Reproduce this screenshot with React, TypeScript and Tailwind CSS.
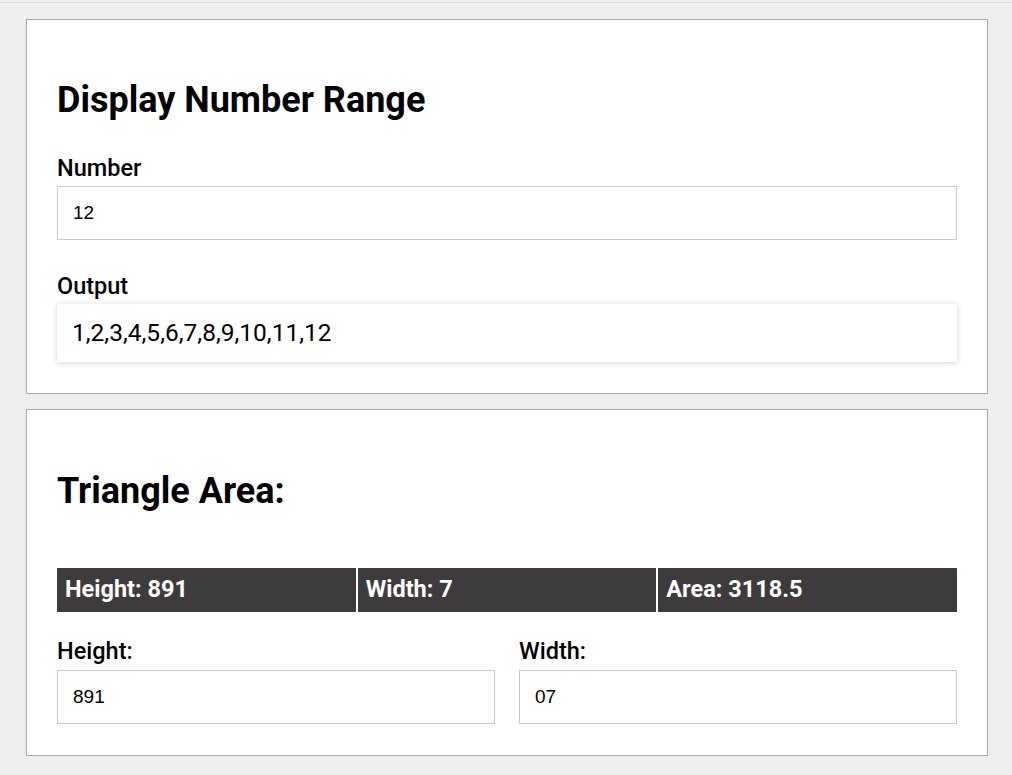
import React, { useState } from "react";

const font = { fontFamily: "Roboto, 'Liberation Sans', sans-serif" };

export default function App() {
  const [num, setNum] = useState("12");
  const [height, setHeight] = useState("891");
  const [width, setWidth] = useState("07");

  const n = parseInt(num, 10) || 0;
  const range = Array.from({ length: Math.max(n, 0) }, (_, i) => i + 1).join(",");
  const h = parseFloat(height) || 0;
  const w = parseFloat(width) || 0;
  const area = (h * w) / 2;

  return (
    <div className="min-h-screen bg-[#eeeeee] pt-[2px] font-[Roboto,'Liberation_Sans',sans-serif] text-black">
      <div className="border-t border-[#dcdcdc] pt-[16px] pl-[26px] pr-[24px] pb-[18px] flex flex-col gap-[15px]">
        {/* Number range */}
        <div className="bg-white border border-[#aaaaaa] px-[30px] pt-[59px] pb-[31px]">
          <h2 className="text-[36px] leading-[42px] font-bold">Display Number Range</h2>
          <label className="block mt-[34px] text-[23.5px] leading-[26px] font-medium">Number</label>
          <input
            value={num}
            onChange={(e) => setNum(e.target.value)}
            className="mt-[5px] block w-full h-[54px] border border-[#cccccc] px-[15px] text-[19px] outline-none font-['Liberation_Sans',Arial,sans-serif]"
          />
          <label className="block mt-[33px] text-[23.5px] leading-[26px] font-medium">Output</label>
          <div className="mt-[5px] h-[58px] flex items-center px-[15px] text-[24.5px] bg-white shadow-[0_1px_6px_rgba(0,0,0,0.18)]">
            {range}
          </div>
        </div>

        {/* Triangle area */}
        <div className="bg-white border border-[#aaaaaa] px-[30px] pt-[60px] pb-[31px]" style={font}>
          <h2 className="text-[36px] leading-[42px] font-bold">Triangle Area:</h2>
          <div className="mt-[56px] grid grid-cols-3 gap-[2px] text-white text-[23.5px] font-bold">
            <div className="bg-[#3d3b3c] h-[44px] flex items-center px-[8px]">Height: {h}</div>
            <div className="bg-[#3d3b3c] h-[44px] flex items-center px-[8px]">Width: {w}</div>
            <div className="bg-[#3d3b3c] h-[44px] flex items-center px-[8px]">Area: {area}</div>
          </div>
          <div className="mt-[26px] grid grid-cols-2 gap-[24px]">
            <div>
              <label className="block text-[23.5px] leading-[26px] font-medium">Height:</label>
              <input
                value={height}
                onChange={(e) => setHeight(e.target.value)}
                className="mt-[6px] block w-full h-[54px] border border-[#cccccc] px-[15px] text-[19px] outline-none font-['Liberation_Sans',Arial,sans-serif]"
              />
            </div>
            <div>
              <label className="block text-[23.5px] leading-[26px] font-medium">Width:</label>
              <input
                value={width}
                onChange={(e) => setWidth(e.target.value)}
                className="mt-[6px] block w-full h-[54px] border border-[#cccccc] px-[15px] text-[19px] outline-none font-['Liberation_Sans',Arial,sans-serif]"
              />
            </div>
          </div>
        </div>
      </div>
    </div>
  );
}
